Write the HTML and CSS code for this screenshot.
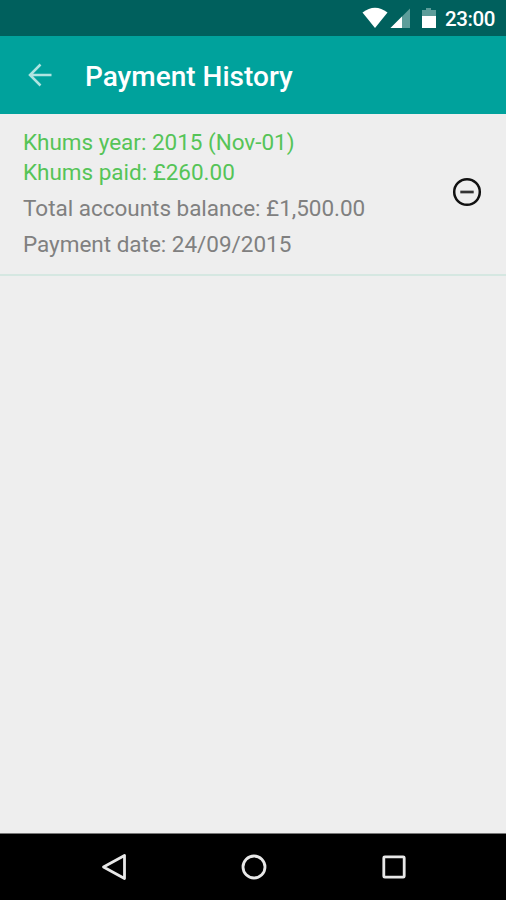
FILE: index.html
```html
<!DOCTYPE html>
<html lang="en">
<head>
    <meta charset="UTF-8">
    <meta name="viewport" content="width=device-width, initial-scale=1.0">
    <title>Payment History</title>
    <link rel="stylesheet" href="styles.css">
</head>
<body>
    <div class="status-bar">
        <svg class="status-icons" width="76" height="24" viewBox="0 0 76 24">
            <!-- wifi -->
            <path d="M0.5 6.5Q13 -3 25.5 6.5L13 22Z" fill="#fff"/>
            <!-- signal -->
            <path d="M28.5 22L48 2.5V22Z" fill="#5d9d9a"/>
            <path d="M28.5 22L40 10.5V22Z" fill="#fff"/>
            <!-- battery -->
            <path d="M60 4H64V2H69V4H74V10H60Z" fill="#5d9d9a"/>
            <path d="M60 10H74V22H60Z" fill="#fff"/>
        </svg>
        <span class="clock">23:00</span>
    </div>

    <header class="toolbar">
        <svg class="back" width="24" height="24" viewBox="0 0 24 24">
            <path d="M23.5 12H2M12.5 1.5L2 12L12.5 22.5" fill="none" stroke="#b0e4e1" stroke-width="2.5"/>
        </svg>
        <h1 class="title">Payment History</h1>
    </header>

    <main class="content">
        <div class="payment">
            <div class="details">
                <p class="line green">Khums year: 2015 (Nov-01)</p>
                <p class="line green">Khums paid: £260.00</p>
                <p class="line balance">Total accounts balance: £1,500.00</p>
                <p class="line date">Payment date: 24/09/2015</p>
            </div>
            <svg class="remove" width="30" height="30" viewBox="0 0 30 30">
                <circle cx="15" cy="15" r="12.8" fill="none" stroke="#111" stroke-width="2.5"/>
                <path d="M8.3 15H21.7" stroke="#333" stroke-width="2.7"/>
            </svg>
        </div>
    </main>

    <nav class="nav-bar">
        <svg width="28" height="28" viewBox="0 0 28 28">
            <path d="M3.5 14L24.5 2.5V25.5Z"/>
        </svg>
        <svg width="28" height="28" viewBox="0 0 28 28">
            <circle cx="14" cy="14" r="11"/>
        </svg>
        <svg width="28" height="28" viewBox="0 0 28 28">
            <rect x="3.8" y="3.8" width="20.4" height="20.4" rx="1"/>
        </svg>
    </nav>
</body>
</html>
```
FILE: styles.css
```css
* {
    box-sizing: border-box;
}

body {
    margin: 0;
    height: 100vh;
    display: flex;
    flex-direction: column;
    background-color: #eee;
    font-family: Roboto, sans-serif;
    overflow: hidden;
}

.status-bar {
    height: 36px;
    padding: 0 11px 0 0;
    display: flex;
    justify-content: flex-end;
    align-items: center;
    gap: 7px;
    background-color: #00605d;
}

.clock {
    color: #fff;
    font-size: 20.5px;
    font-weight: 500;
    letter-spacing: -0.4px;
    line-height: 36px;
    padding-top: 2px;
}

.toolbar {
    height: 78px;
    padding-left: 28px;
    display: flex;
    align-items: center;
    gap: 33px;
    background-color: #00a29c;
}

.title {
    margin: 0;
    color: #fff;
    font-size: 28px;
    font-weight: 500;
    line-height: 36px;
    padding-top: 4px;
}

.content {
    flex: 1;
}

.payment {
    height: 162px;
    padding: 13px 24px 0 23px;
    display: flex;
    justify-content: space-between;
    border-bottom: 2px solid #d5e7e1;
}

.line {
    margin: 0;
    color: #808080;
    font-size: 22.5px;
    letter-spacing: -0.02px;
    line-height: 30px;
    white-space: nowrap;
}

.green {
    color: #55c457;
}

.balance,
.date {
    margin-top: 6px;
}

.remove {
    margin-top: 50px;
}

.nav-bar {
    height: 67px;
    padding: 0 98px 1px 100px;
    display: flex;
    justify-content: space-between;
    align-items: center;
    background-color: #000;
    border-top: 1px solid #777;
}

.nav-bar svg {
    fill: none;
    stroke: #e8e8e8;
    stroke-width: 2.8;
    stroke-linejoin: round;
}
```
